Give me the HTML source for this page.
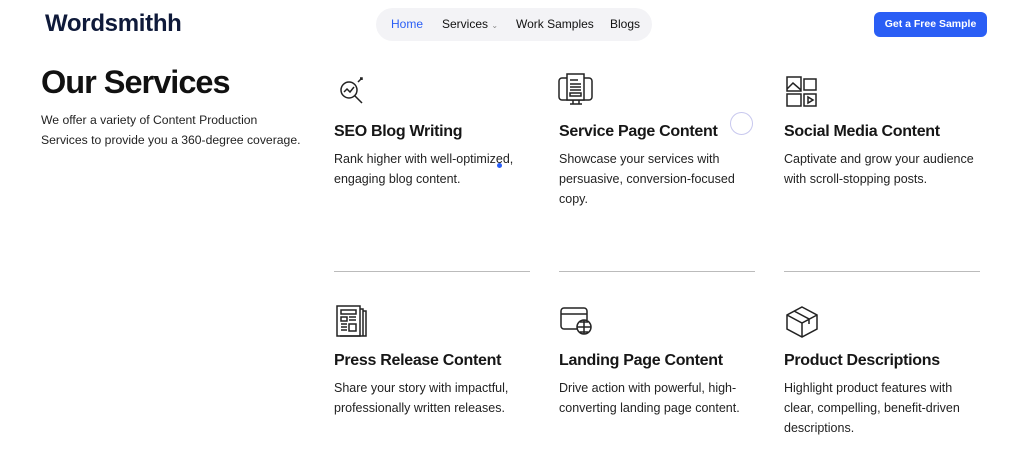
<!DOCTYPE html>
<html><head><meta charset="utf-8"><style>
*{margin:0;padding:0;box-sizing:border-box}
body{width:1024px;height:470px;background:#fff;font-family:"Liberation Sans",sans-serif;color:#111;position:relative;overflow:hidden}
.a{position:absolute}
.logo{left:45px;top:10px;font-size:24px;font-weight:bold;color:#0f1a3a;letter-spacing:-0.3px}
.nav{left:376px;top:8px;width:276px;height:33px;background:#f3f3f6;border-radius:17px;font-size:12px;color:#111}
.nav span{position:absolute;top:9px}
.btn{left:874px;top:12px;width:113px;height:25px;background:#2a5ef5;border-radius:6px;color:#fff;font-size:10.5px;font-weight:bold;text-align:center;line-height:25px}
h1{position:absolute;left:41px;top:64px;font-size:32.5px;font-weight:bold;letter-spacing:-1px;color:#111}
.intro{left:41px;top:110px;font-size:12.2px;line-height:20px;color:#222}
.card{position:absolute;width:200px}
.card h3{font-size:16px;font-weight:bold;color:#161616;letter-spacing:-0.3px}
.card p{font-size:12.5px;line-height:20px;color:#222;margin-top:8px}
.line{position:absolute;top:271px;width:196px;height:1px;background:#bbb}
svg{position:absolute;fill:none;stroke:#222;stroke-width:1.5}
</style></head><body>
<div class="a logo">Wordsmithh</div>
<div class="a nav"><span style="left:15px;color:#2a5ef5">Home</span><span style="left:66px">Services <small style="font-size:8px;color:#888">⌄</small></span><span style="left:140px">Work Samples</span><span style="left:234px">Blogs</span></div>
<div class="a btn">Get a Free Sample</div>
<h1>Our Services</h1>
<div class="a intro">We offer a variety of Content Production<br>Services to provide you a 360-degree coverage.</div>

<svg style="left:336px;top:76px" width="32" height="32" viewBox="0 0 32 32"><circle cx="13" cy="14" r="8"/><path d="M19 20l7 7M8 16l3-3 3 3 4-5M22 6l4-4M24 2h2v2"/></svg>
<svg style="left:557px;top:72px" width="38" height="36" viewBox="0 0 38 36"><rect x="2" y="6" width="33" height="22" rx="3"/><rect x="10" y="2" width="17" height="26" fill="#fff"/><path d="M13 8h8M13 12h11M13 15h11M13 18h11M13 21h11v3H13zM16 28v4M22 28v4M13 32h12"/></svg>
<svg style="left:786px;top:76px" width="32" height="32" viewBox="0 0 32 32"><rect x="1" y="1" width="14" height="14"/><path d="M1 13l6-6 8 7"/><rect x="18" y="3" width="12" height="11"/><rect x="1" y="18" width="14" height="12"/><rect x="18" y="18" width="12" height="12"/><path d="M22 21v6l5-3z"/></svg>
<svg style="left:336px;top:305px" width="32" height="32" viewBox="0 0 32 32"><rect x="1" y="1" width="23" height="30"/><path d="M24 4h3v27M27 6h3v25H4M5 5h15v4H5zM5 12h6v4H5zM13 12h7M13 15h7M5 19h6M5 22h6M5 25h6M13 19h7v7h-7z"/></svg>
<svg style="left:560px;top:307px" width="34" height="28" viewBox="0 0 34 28"><path d="M18 22H4a3 3 0 0 1-3-3V4a3 3 0 0 1 3-3h20a3 3 0 0 1 3 3v9M1 7h26"/><circle cx="24" cy="20" r="7"/><path d="M17 20h14M24 13v14M20 15h8M20 25h8"/></svg>
<svg style="left:785px;top:305px" width="34" height="34" viewBox="0 0 34 34"><path d="M17 2l15 8v14l-15 8-15-8V10zM2 10l15 8 15-8M17 18v14M9 6l15 8v5"/></svg>

<div class="card" style="left:334px;top:123px"><h3>SEO Blog Writing</h3><p>Rank higher with well-optimized, engaging blog content.</p></div>
<div class="card" style="left:559px;top:123px"><h3>Service Page Content</h3><p>Showcase your services with persuasive, conversion-focused copy.</p></div>
<div class="card" style="left:784px;top:123px"><h3>Social Media Content</h3><p>Captivate and grow your audience with scroll-stopping posts.</p></div>
<div class="line" style="left:334px"></div><div class="line" style="left:559px"></div><div class="line" style="left:784px"></div>
<div class="card" style="left:334px;top:352px"><h3>Press Release Content</h3><p>Share your story with impactful, professionally written releases.</p></div>
<div class="card" style="left:559px;top:352px"><h3>Landing Page Content</h3><p>Drive action with powerful, high-converting landing page content.</p></div>
<div class="card" style="left:784px;top:352px"><h3>Product Descriptions</h3><p>Highlight product features with clear, compelling, benefit-driven descriptions.</p></div>
<div class="a" style="left:730px;top:112px;width:23px;height:23px;border:1.5px solid #c8c8ee;border-radius:50%"></div>
<div class="a" style="left:497px;top:163px;width:5px;height:5px;background:#2a5ef5;border-radius:50%"></div>
</body></html>
